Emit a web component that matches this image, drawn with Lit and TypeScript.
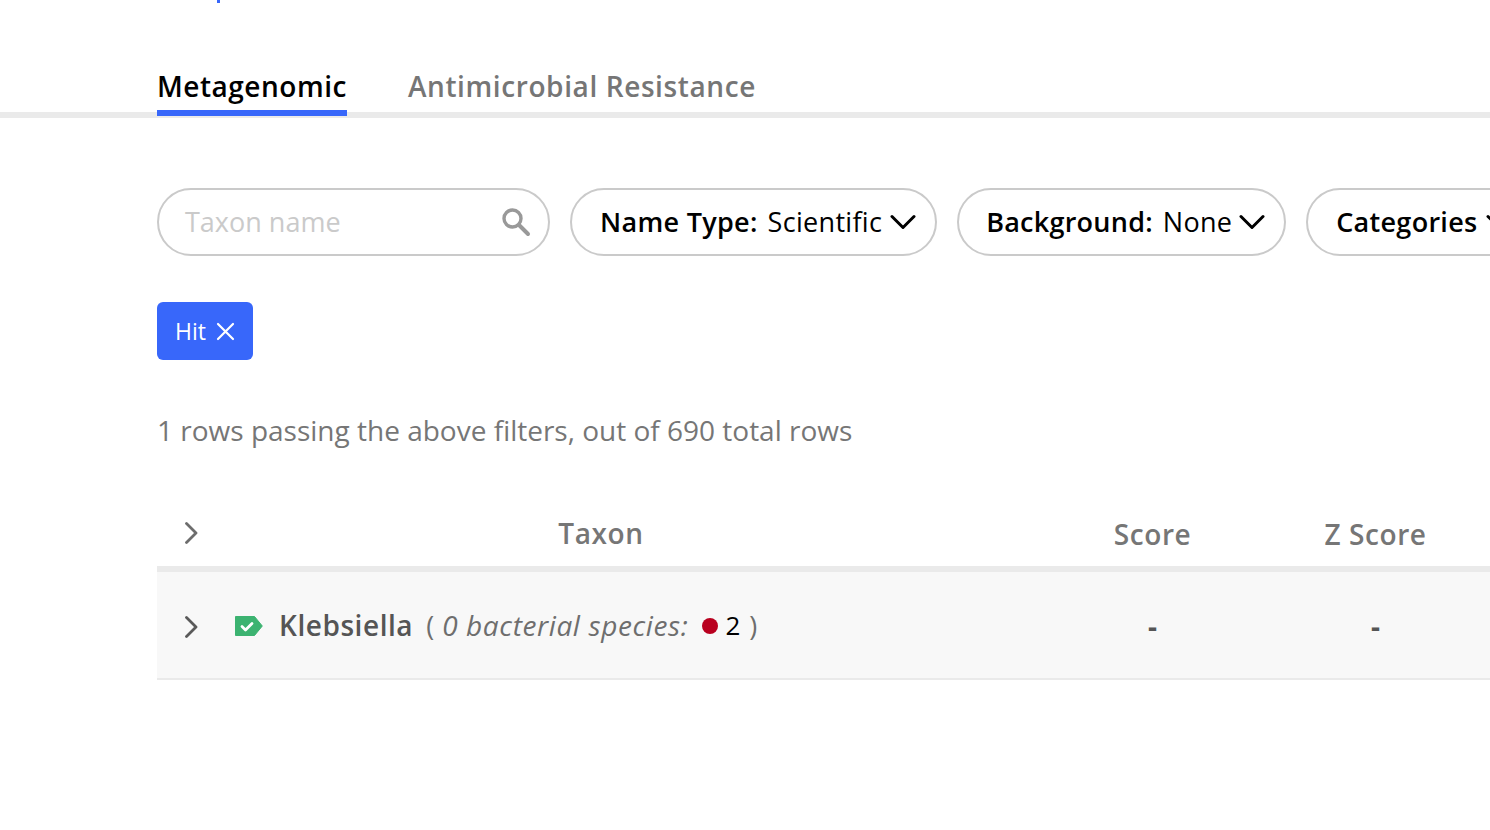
import { LitElement, css, html, svg } from "lit";
import { customElement } from "lit/decorators.js";

const chevronDown = svg`<path d="M2 3.5l11 11 11-11" fill="none" stroke="currentColor" stroke-width="3" stroke-linecap="round" stroke-linejoin="round" />`;
const chevronRight = svg`<path d="M1.5 1.5l9.5 9.5-9.5 9.5" fill="none" stroke="currentColor" stroke-width="2.8" stroke-linecap="round" stroke-linejoin="round" />`;

@customElement("app-root")
export class AppRoot extends LitElement {
  static styles = css`
    :host {
      display: block;
      width: 1490px;
      height: 830px;
      overflow: hidden;
      background: #fff;
      font-family: "Open Sans", "Noto Sans", sans-serif;
      color: #000;
    }
    .crumb-stub {
      width: 3px;
      height: 3px;
      margin-left: 217px;
      background: #3867fa;
    }
    .tabs {
      display: flex;
      gap: 61px;
      height: 109px;
      padding: 0 0 0 157px;
      margin-bottom: 70px;
      border-bottom: 6px solid #eaeaea;
      box-sizing: content-box;
      align-items: flex-end;
    }
    .tab {
      font-size: 28px;
      line-height: 32px;
      font-weight: 600;
      color: #767676;
      letter-spacing: 0.6px;
      margin-bottom: -4px;
      height: 40px;
      border-bottom: 6px solid transparent;
    }
    .tab.active {
      color: #000;
      letter-spacing: 0.52px;
      border-bottom-color: #3867fa;
    }
    .filters {
      display: flex;
      gap: 20px;
      padding-left: 157px;
      width: 1700px;
    }
    .pill {
      display: flex;
      align-items: center;
      height: 68px;
      box-sizing: border-box;
      border: 2px solid #cacaca;
      border-radius: 34px;
      font-size: 27px;
      letter-spacing: 0.3px;
      white-space: nowrap;
      padding: 0 19px 2px 28px;
      flex: none;
    }
    .pill b {
      font-weight: 600;
      margin-right: 10px;
    }
    .pill b.solo {
      margin-right: 0;
    }
    .pill svg {
      width: 26px;
      height: 18px;
      margin: 2px 0 0 8px;
      flex: none;
    }
    .pill.tight {
      padding-left: 27px;
      letter-spacing: 0.25px;
    }
    .pill.tight svg {
      margin-left: 7px;
    }
    .search {
      width: 393px;
      justify-content: space-between;
      padding: 0 17px 2px 26px;
      color: #cacaca;
      letter-spacing: 0;
    }
    .search svg {
      width: 30px;
      height: 30px;
      color: #999;
    }
    .chips {
      padding: 46px 0 0 157px;
    }
    .chip {
      display: inline-flex;
      align-items: center;
      gap: 10px;
      height: 58px;
      padding: 0 18px;
      box-sizing: border-box;
      background: #3867fa;
      border-radius: 6px;
      color: #fff;
      font-size: 23px;
    }
    .chip svg {
      width: 19px;
      height: 19px;
    }
    .stats {
      padding: 49px 0 0 157px;
      font-size: 28px;
      line-height: 42px;
      color: #767676;
    }
    .table {
      margin: 59px 0 0 157px;
      width: 1500px;
    }
    .row {
      position: relative;
      display: grid;
      grid-template-columns: 884px 223px 223px 1fr;
      align-items: center;
    }
    .head {
      border-bottom: 6px solid #eaeaea;
      font-size: 28px;
      font-weight: 600;
      letter-spacing: 0.6px;
      color: #767676;
      padding-bottom: 9px;
      box-sizing: content-box;
      height: 47px;
    }
    .center {
      text-align: center;
    }
    .taxon-head {
      padding: 0 0 2px 4px;
    }
    .arrow {
      position: absolute;
      left: 28px;
      top: 44px;
      width: 14px;
      height: 22px;
      color: #5a5a5a;
    }
    .head .arrow {
      top: 12px;
      color: #6d6d6d;
    }
    .body {
      height: 106px;
      background: #f8f8f8;
      border-bottom: 2px solid #eaeaea;
      box-sizing: content-box;
    }
    .taxon {
      display: flex;
      align-items: center;
      padding-left: 78px;
      white-space: nowrap;
    }
    .tag {
      width: 28px;
      height: 20px;
      margin: 2px 16px 0 0;
      flex: none;
    }
    .name {
      font-size: 28px;
      font-weight: 600;
      letter-spacing: 0.55px;
      color: #555;
      margin-right: 13px;
    }
    .paren {
      font-size: 27px;
      color: #6e6e6e;
    }
    .species {
      font-size: 28px;
      font-style: italic;
      color: #6e6e6e;
      letter-spacing: 0.62px;
      margin-left: 8px;
    }
    .dot {
      width: 16px;
      height: 16px;
      border-radius: 50%;
      background: #b9001f;
      margin: 2px 7px 0 14px;
      flex: none;
    }
    .count {
      font-size: 26px;
      color: #000;
      margin-right: 9px;
    }
    .dash {
      font-size: 28px;
      font-weight: 700;
      color: #555;
      padding-top: 2px;
    }
  `;

  render() {
    return html`
      <div class="crumb-stub"></div>
      <div class="tabs">
        <div class="tab active">Metagenomic</div>
        <div class="tab">Antimicrobial Resistance</div>
      </div>

      <div class="filters">
        <div class="pill search">
          <span>Taxon name</span>
          <svg viewBox="0 0 30 30">
            <circle cx="11.5" cy="11.5" r="8.5" fill="none" stroke="currentColor" stroke-width="3.4" />
            <path d="M18 18l9 9" fill="none" stroke="currentColor" stroke-width="4" stroke-linecap="round" />
          </svg>
        </div>
        <div class="pill"><b>Name Type:</b>Scientific<svg viewBox="0 0 26 18">${chevronDown}</svg></div>
        <div class="pill tight"><b>Background:</b>None<svg viewBox="0 0 26 18">${chevronDown}</svg></div>
        <div class="pill"><b class="solo">Categories</b><svg viewBox="0 0 26 18">${chevronDown}</svg></div>
      </div>

      <div class="chips">
        <div class="chip">
          Hit
          <svg viewBox="0 0 19 19">
            <path d="M2 2l15 15M17 2L2 17" fill="none" stroke="currentColor" stroke-width="2.2" stroke-linecap="round" />
          </svg>
        </div>
      </div>

      <div class="stats">1 rows passing the above filters, out of 690 total rows</div>

      <div class="table">
        <div class="row head">
          <svg class="arrow" viewBox="0 0 14 22">${chevronRight}</svg>
          <div class="center taxon-head">Taxon</div>
          <div class="center">Score</div>
          <div class="center">Z Score</div>
        </div>
        <div class="row body">
          <svg class="arrow" viewBox="0 0 14 22">${chevronRight}</svg>
          <div class="taxon">
            <svg class="tag" viewBox="0 0 28 20">
              <path d="M0.5 0.5h19l7.8 9.5-7.8 9.5H0.5z" fill="#3cb371" stroke="#3cb371" stroke-linejoin="round" />
              <path d="M7 10.5l3.5 3.5 6.5-6.5" fill="none" stroke="#fff" stroke-width="2.8" stroke-linecap="round" stroke-linejoin="round" />
            </svg>
            <span class="name">Klebsiella</span>
            <span class="paren">(</span>
            <span class="species">0 bacterial species:</span>
            <span class="dot"></span>
            <span class="count">2</span>
            <span class="paren">)</span>
          </div>
          <div class="center dash">-</div>
          <div class="center dash">-</div>
        </div>
      </div>
    `;
  }
}
